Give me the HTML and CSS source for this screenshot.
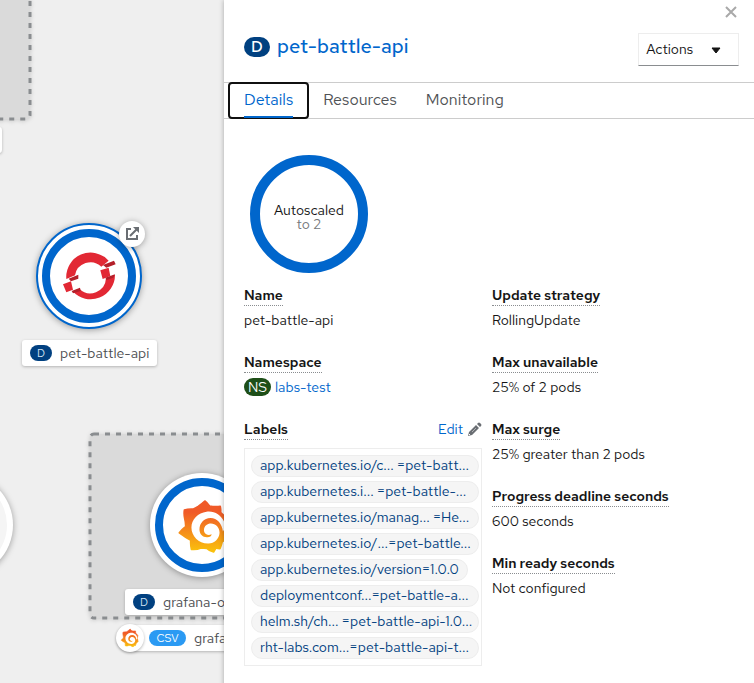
FILE: index.html
```html
<!DOCTYPE html>
<html lang="en">
<head>
<meta charset="utf-8">
<title>Topology</title>
<link rel="stylesheet" href="styles.css">
</head>
<body>
<svg class="defs" aria-hidden="true">
  <defs>
    <linearGradient id="flame" x1="0" y1="0" x2="0" y2="170" gradientUnits="userSpaceOnUse">
      <stop offset="0.25" stop-color="#f05a28"/>
      <stop offset="1" stop-color="#fbca0a"/>
    </linearGradient>
    <symbol id="grafana" viewBox="0 0 170 170">
      <path fill="url(#flame)" stroke="url(#flame)" stroke-width="5" stroke-linejoin="round" d="M86 9Q93 14 100 24Q116 27 132 25Q134 34 133 43Q144 53 152 64Q149 77 148 90Q152 104 154 115Q147 124 138 130Q135 142 131 151Q124 151 119 149L112 161Q100 158 92 150Q82 149 75 149Q60 155 46 153Q43 140 44 126Q27 117 10 104Q19 93 29 85Q29 72 26 61Q23 48 25 36Q36 32 52 33Q60 29 66 25Q76 18 86 9Z"/>
      <path fill="#fff" d="M91 41C120 37 144 58 148 87L140 100C137 77 123 60 103 60C83 60 70 76 70 94C70 108 80 118 94 117C101 117 107 113 106 108C98 112 89 110 85 103C80 93 86 80 98 77C114 73 130 85 130 104C129 122 114 136 97 136C68 137 46 114 46 88C46 64 66 44 91 41Z"/>
    </symbol>
  </defs>
</svg>
<div class="page">
  <main class="canvas" aria-label="Topology">
    <svg class="scene" width="224" height="683" aria-hidden="true">
      <g class="group">
        <rect x="-80" y="-60" width="110" height="179" rx="4"/>
        <rect x="90" y="434" width="190" height="184" rx="4"/>
      </g>
      <g class="disc">
        <circle cx="-39" cy="525" r="52"/>
        <circle cx="202" cy="525" r="52"/>
        <circle class="selected" cx="89" cy="276" r="52"/>
      </g>
      <circle cx="-39" cy="525" r="46" fill="#f5f5f5"/>
      <g class="ring">
        <circle cx="89" cy="276" r="43"/>
        <circle cx="202" cy="525" r="43"/>
      </g>
      <g transform="translate(0 210) scale(.3333)">
        <path fill="#e22834" d="M199 207A73 73 0 0 1 326 152L304 170A47 47 0 0 0 225 196ZM218 244A73 73 0 0 0 345 194L318 205A47 47 0 0 1 238 236ZM301 181L326 173L331 198L308 207ZM189 223L213 214L219 239L199 247Z"/>
        <path fill="#b31f29" d="M309 165L342 152L347 163L319 173ZM316 203L345 193L340 203L320 210ZM206 206L235 194V206L213 214ZM215 243L240 233L242 243L219 250Z"/>
      </g>
      <use href="#grafana" x="176" y="498" width="57" height="57"/>
      <g class="disc">
        <circle cx="132" cy="234" r="13"/>
      </g>
      <path fill="none" stroke="#6a6e73" stroke-width="2" d="M131 229H127V239H137V235M130 236L137 229"/>
      <path fill="#6a6e73" d="M133 227H139V233Z"/>
    </svg>
    <div class="tag tag-edge"></div>
    <div class="tag tag-pet"><span class="pill">D</span>pet-battle-api</div>
    <div class="tag tag-operator"><span class="pill">D</span>grafana-o</div>
    <div class="tag tag-csv"><svg class="mark" viewBox="0 0 20 20" aria-hidden="true"><use href="#grafana" width="20" height="20"/></svg><span class="pill pill-csv">CSV</span>grafa</div>
  </main>
  <aside class="panel">
    <div class="close-row">
      <button class="close" type="button" aria-label="Close"><svg width="12" height="12" viewBox="0 0 12 12"><path d="M1 1L11 11M11 1L1 11" stroke="#a9a9a9" stroke-width="2"/></svg></button>
    </div>
    <header class="heading">
      <h1><span class="badge">D</span><a href="#details">pet-battle-api</a></h1>
      <button class="actions" type="button">Actions<svg width="10" height="6" viewBox="0 0 10 6" aria-hidden="true"><path d="M1 1H9L5 6Z" fill="#151515" stroke="#151515" stroke-linejoin="round"/></svg></button>
    </header>
    <nav class="tabs">
      <button class="tab current" type="button"><span>Details</span></button>
      <button class="tab" type="button"><span>Resources</span></button>
      <button class="tab" type="button"><span>Monitoring</span></button>
    </nav>
    <section class="details" id="details">
      <div class="donut"><span>Autoscaled</span><small>to 2</small></div>
      <div class="columns">
        <dl>
          <dt><span>Name</span></dt>
          <dd>pet-battle-api</dd>
          <dt><span>Namespace</span></dt>
          <dd class="namespace"><span class="badge badge-ns">NS</span><a href="#ns">labs-test</a></dd>
          <dt class="split"><span>Labels</span><button class="edit" type="button">Edit<svg width="14" height="14" viewBox="0 0 14 14" aria-hidden="true"><path fill="#6a6e73" d="M0 14L1 10L8 3L11 6L4 13ZM9 2L10 1Q11 0 12 1L13 2Q14 3 13 4L12 5Z"/><path d="M4 10L8 6" stroke="#b0b2b5"/><path d="M1 12L2 13" stroke="#fff"/></svg></button></dt>
          <dd>
            <ul class="labels">
              <li class="loose"><a href="#l1"><span>app.kubernetes.io/c...</span><span>=pet-batt...</span></a></li>
              <li class="loose"><a href="#l2"><span>app.kubernetes.i...</span><span>=pet-battle-...</span></a></li>
              <li class="loose"><a href="#l3"><span>app.kubernetes.io/manag...</span><span>=He...</span></a></li>
              <li><a href="#l4"><span>app.kubernetes.io/...</span><span>=pet-battle...</span></a></li>
              <li class="short"><a href="#l5"><span>app.kubernetes.io/version=1.0.0</span></a></li>
              <li><a href="#l6"><span>deploymentconf...</span><span>=pet-battle-a...</span></a></li>
              <li class="loose"><a href="#l7"><span>helm.sh/ch...</span><span>=pet-battle-api-1.0...</span></a></li>
              <li><a href="#l8"><span>rht-labs.com...</span><span>=pet-battle-api-t...</span></a></li>
            </ul>
          </dd>
        </dl>
        <dl>
          <dt><span>Update strategy</span></dt>
          <dd>RollingUpdate</dd>
          <dt><span>Max unavailable</span></dt>
          <dd>25% of 2 pods</dd>
          <dt><span>Max surge</span></dt>
          <dd>25% greater than 2 pods</dd>
          <dt><span>Progress deadline seconds</span></dt>
          <dd>600 seconds</dd>
          <dt><span>Min ready seconds</span></dt>
          <dd>Not configured</dd>
        </dl>
      </div>
    </section>
  </aside>
</div>
</body>
</html>
```
FILE: styles.css
```css
* { box-sizing: border-box; }
body {
  margin: 0;
  font: 14px/20px "Red Hat Text", "Noto Sans", sans-serif;
  color: #151515;
}
button { font: inherit; color: inherit; background: none; border: 0; padding: 0; }
a { color: #06c; text-decoration: none; }
.defs { position: absolute; width: 0; height: 0; }
.page {
  display: grid;
  grid-template-columns: 112fr 265fr;
  min-height: 100vh;
}
.canvas { position: relative; overflow: hidden; background: #efefef; }
.scene { display: block; }
.group rect {
  fill: #dadada;
  stroke: #8a8d90;
  stroke-width: 3;
  stroke-dasharray: 5 6;
  filter: drop-shadow(0 1px 2px rgba(0, 0, 0, .15));
}
.disc circle { fill: #fff; filter: drop-shadow(0 1px 3px rgba(0, 0, 0, .35)); }
.disc .selected { stroke: #06c; stroke-width: 2; }
.ring circle { fill: none; stroke: #06c; stroke-width: 8; }
.tag {
  position: absolute;
  display: flex;
  align-items: center;
  gap: 8px;
  height: 26px;
  padding: 0 8px;
  border-radius: 3px;
  background: #fff;
  box-shadow: 0 1px 3px rgba(0, 0, 0, .25);
  color: #4b4d50;
  white-space: nowrap;
}
.tag-edge { left: -20px; top: 127px; width: 22px; }
.tag-pet { left: 22px; top: 340px; }
.tag-operator { left: 125px; top: 589px; }
.tag-csv { left: 117px; top: 625px; padding: 0 0 0 32px; border-radius: 13px 0 0 13px; }
.mark {
  position: absolute;
  left: -1px;
  top: -1px;
  width: 28px;
  height: 28px;
  padding: 4px;
  border-radius: 50%;
  background: #fff;
  box-shadow: 0 1px 3px rgba(0, 0, 0, .3);
}
.pill {
  width: 22px;
  border-radius: 8px;
  background: #004080;
  color: #d2e4f5;
  font-size: 11px;
  line-height: 16px;
  text-align: center;
}
.pill-csv { width: 37px; background: #2b9af3; color: #fff; }
.panel {
  position: relative;
  min-width: 0;
  background: #fff;
  box-shadow: 0 0 5px rgba(0, 0, 0, .3);
}
.close-row { display: flex; justify-content: flex-end; padding: 6px 17px 0; }
.close { display: flex; height: 12px; }
.heading {
  display: flex;
  justify-content: space-between;
  padding: 15px 15px 16px 20px;
}
h1 { display: flex; align-items: center; gap: 7px; height: 28px; margin: 0; font-size: 20px; line-height: 28px; font-weight: 500; }
h1 a { padding-bottom: 2px; }
.badge {
  min-width: 26px;
  border-radius: 10px;
  background: #004080;
  color: #fff;
  font-size: 16px;
  line-height: 20px;
  text-align: center;
}
.actions {
  display: flex;
  align-items: center;
  gap: 18px;
  height: 33px;
  padding: 0 17px 2px 7px;
  border: 1px solid #ededed;
  border-bottom-color: #8a8d90;
  line-height: 18px;
}
.actions svg { margin-top: 3px; }
.tabs {
  display: flex;
  height: 37px;
  padding-left: 4px;
  border: solid #ccc;
  border-width: 1px 0;
  font-size: 16px;
  color: #4f5255;
}
.tab { padding: 0 15px; line-height: 33px; }
.tab.current {
  margin: -1px 0;
  padding: 0 14px;
  border: 2px solid #101010;
  border-radius: 4px;
  color: #06c;
  line-height: 32px;
}
.tab + .tab { padding-left: 14px; }
.tab span { display: block; height: 35px; }
.current span { height: 34px; border-bottom: 2px solid #06c; margin-bottom: -1px; }
.details { padding: 36px 20px 17px; }
.donut {
  display: flex;
  flex-direction: column;
  align-items: center;
  justify-content: center;
  width: 118px;
  height: 118px;
  margin: 0 6px 12px;
  border: 10px solid #06c;
  border-radius: 50%;
  line-height: 14px;
  padding-top: 6px;
}
.donut small { font-size: 14px; color: #75787b; }
.columns { display: grid; grid-template-columns: 119fr 121fr; gap: 10px; }
dl { margin: 0; min-width: 0; }
dt { display: flex; height: 25px; font-weight: 600; }
dt > span { height: 21px; border-bottom: 1px dotted #8a8d90; }
dd { margin: 0 0 22px; }
.namespace { display: flex; gap: 4px; }
.badge-ns { min-width: 27px; background: #1e4f18; font-size: 14px; line-height: 18px; margin: 1px 0; }
.split { justify-content: space-between; height: 29px; }
.edit { display: flex; align-items: center; gap: 5px; height: 20px; color: #06c; font-weight: 400; }
.labels { list-style: none; margin: 0; padding: 6px 2px 6px 6px; border: 1px solid #ededed; }
.labels li { margin-bottom: 4px; }
.labels li:last-child { margin: 0; }
.labels a {
  display: flex;
  height: 22px;
  padding: 0 8px;
  border: 1px solid #ededed;
  border-radius: 11px;
  background: #f5f5f5;
  color: #004080;
  line-height: 18px;
  white-space: nowrap;
}
.labels .loose a { gap: 3px; }
.labels .short a { width: fit-content; }
```
